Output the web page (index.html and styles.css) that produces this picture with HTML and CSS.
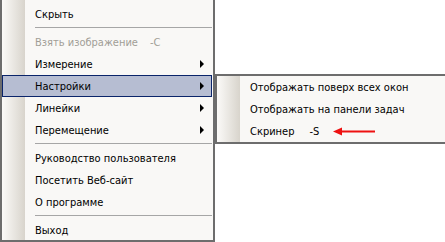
FILE: index.html
```html
<!doctype html>
<html lang="ru">
  <head>
    <meta charset="utf-8" />
    <title>Меню</title>
    <link rel="stylesheet" href="styles.css">
  </head>
  <body>
    <div class="menu main-menu">
      <div class="item">Скрыть</div>
      <div class="sep"></div>
      <div class="item disabled">Взять изображение <span class="key">-C</span></div>
      <div class="item has-sub">Измерение</div>
      <div class="item has-sub active">Настройки</div>
      <div class="item has-sub">Линейки</div>
      <div class="item has-sub">Перемещение</div>
      <div class="sep"></div>
      <div class="item">Руководство пользователя</div>
      <div class="item">Посетить Веб-сайт</div>
      <div class="item">О программе</div>
      <div class="sep"></div>
      <div class="item">Выход</div>

      <!-- submenu of "Настройки" -->
      <div class="menu sub-menu">
        <div class="item">Отображать поверх всех окон</div>
        <div class="item">Отображать на панели задач</div>
        <div class="item">Скринер <span class="key key-s">-S</span>
          <svg class="pointer" width="42" height="9" viewBox="0 0 42 9">
            <path d="M0 4.5 L9 0.5 L9 8.5 Z" fill="#ee1111" />
            <rect x="8" y="3.5" width="34" height="2" fill="#ee1111" />
          </svg>
        </div>
      </div>
    </div>
  </body>
</html>
```

FILE: styles.css
```css
html, body {
  margin: 0;
  background-color: #fff;
}

body {
  width: 445px;
  height: 242px;
  overflow: hidden;
  font-family: Tahoma, "DejaVu Sans Condensed", "DejaVu Sans", sans-serif;
  font-size: 11px;
  color: #000;
}

.menu {
  box-sizing: border-box;
  border: 2px solid #6d6d6d;
  background: linear-gradient(to right, #fbfaf8 0, #d8d4cc 23px, #f9f8f6 23px);
}

.main-menu {
  position: relative;
  width: 215px;
  height: 242px;
  border-top: 0;
  padding-top: 3px;
}

.sub-menu {
  position: absolute;
  left: 213px;
  top: 74px;
  width: 232px;
  height: 70px;
}

.item {
  position: relative;
  display: flex;
  align-items: center;
  height: 22px;
  padding-left: 33px;
  margin-right: 1px;
  white-space: nowrap;
}

.item.disabled {
  color: #a19e96;
}

.item.active {
  background-color: #b6bdd2;
  box-shadow: inset 0 0 0 1px #0a246a;
}

.key {
  margin-left: 12px;
}

.key-s {
  margin-left: 15px;
}

.has-sub::after {
  content: "";
  position: absolute;
  right: 8px;
  top: 7px;
  border-left: 4px solid #000;
  border-top: 4px solid transparent;
  border-bottom: 4px solid transparent;
}

.sep {
  height: 6px;
  margin-left: 33px;
  margin-right: 1px;
  background: linear-gradient(#a6a6a6, #a6a6a6) 0 2px / 100% 1px no-repeat;
}

.pointer {
  margin-left: 14px;
}
```
